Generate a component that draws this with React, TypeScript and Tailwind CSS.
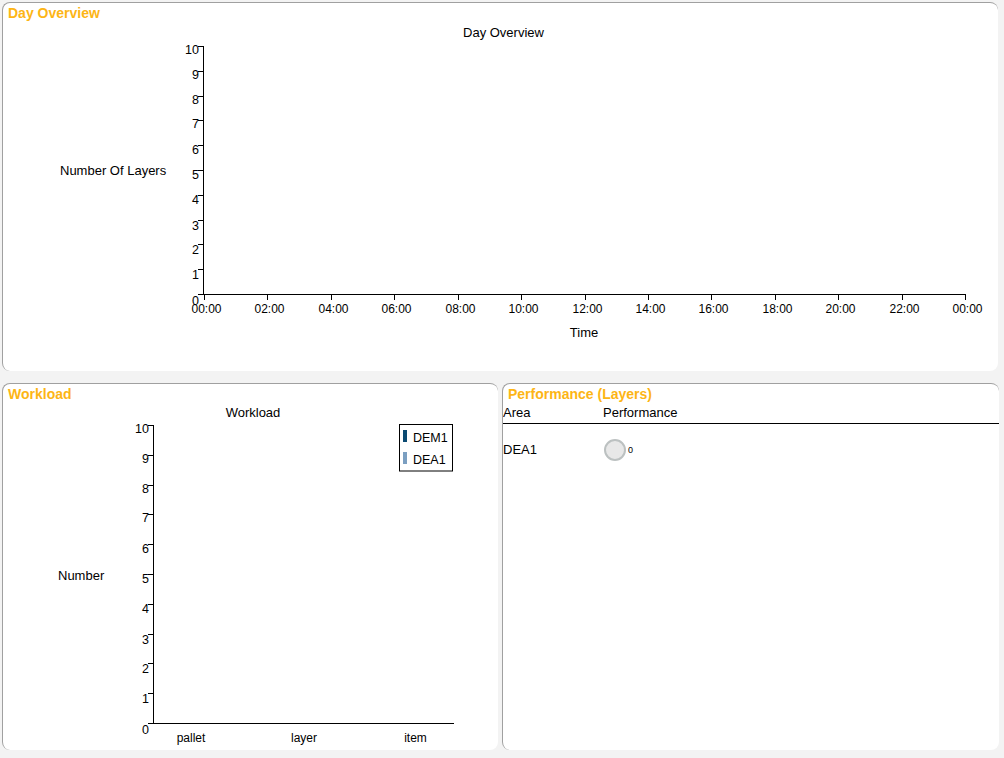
import React, { FC, ReactNode } from "react";

const FONT = '"Liberation Sans", Arial, Helvetica, sans-serif';

interface PanelProps {
  title: string;
  className?: string;
  children?: ReactNode;
}

const Panel: FC<PanelProps> = ({ title, className, children }) => (
  <div
    className={`bg-white border-t border-l border-[#a0a0a0] rounded-[8px] flex flex-col overflow-hidden ${className ?? ""}`}
  >
    <div className="h-[19px] pt-[1px] pl-[5px] text-[14px] leading-[18px] font-bold text-[#fdb515] shrink-0">
      {title}
    </div>
    {children}
  </div>
);

// y axis with ticks on the left, labels 0..10
const YAxis: FC<{ x: number; top: number; bottom: number }> = ({ x, top, bottom }) => {
  const step = (bottom - top) / 10;
  return (
    <g>
      <line x1={x + 0.5} y1={top} x2={x + 0.5} y2={bottom + 1} stroke="#000" strokeWidth={1} />
      {Array.from({ length: 11 }, (_, i) => {
        const y = Math.round(bottom - i * step) + 0.5;
        return (
          <g key={i}>
            <line x1={x - 5} y1={y} x2={x + 1} y2={y} stroke="#000" strokeWidth={1} />
            <text x={x - 4} y={y + 7 + (10 - i) * 0.3} textAnchor="end" fontSize={12.5} fill="#000">
              {i}
            </text>
          </g>
        );
      })}
    </g>
  );
};

const hours = ["00:00", "02:00", "04:00", "06:00", "08:00", "10:00", "12:00", "14:00", "16:00", "18:00", "20:00", "22:00", "00:00"];

const DayOverviewChart: FC = () => {
  const x0 = 204;
  const x1 = 965;
  const step = (x1 - x0) / 12;
  return (
    <svg width={995} height={349} viewBox="3 22 995 349" style={{ fontFamily: FONT }} className="block">
      <text x={503.5} y={36.5} textAnchor="middle" fontSize={13} fill="#000">
        Day Overview
      </text>
      <text x={60} y={175} fontSize={13} fill="#000">
        Number Of Layers
      </text>
      <YAxis x={203} top={46} bottom={294} />
      <line x1={x0} y1={294.5} x2={x1 + 0.5} y2={294.5} stroke="#000" strokeWidth={1} />
      {hours.map((h, j) => {
        const x = Math.round(x0 + j * step) + 0.5;
        return (
          <g key={j}>
            <line x1={x} y1={294} x2={x} y2={300} stroke="#000" strokeWidth={1} />
            <text x={x + 2} y={312.5} textAnchor="middle" fontSize={12} fill="#000">
              {h}
            </text>
          </g>
        );
      })}
      <text x={584} y={337} textAnchor="middle" fontSize={13} fill="#000">
        Time
      </text>
    </svg>
  );
};

const WorkloadChart: FC = () => (
  <svg width={495} height={347} viewBox="3 403 495 347" style={{ fontFamily: FONT }} className="block">
    <text x={253} y={416.5} textAnchor="middle" fontSize={13} fill="#000">
      Workload
    </text>
    <text x={58} y={579.5} fontSize={13} fill="#000">
      Number
    </text>
    <YAxis x={153} top={425} bottom={723} />
    <line x1={153} y1={723.5} x2={454} y2={723.5} stroke="#000" strokeWidth={1} />
    {[
      ["pallet", 191],
      ["layer", 304],
      ["item", 415.5],
    ].map(([t, x]) => (
      <text key={t as string} x={x as number} y={742} textAnchor="middle" fontSize={12} fill="#000">
        {t}
      </text>
    ))}
    <rect x={399.5} y={424.5} width={53} height={46.5} fill="#fff" stroke="#000" strokeWidth={1} />
    <rect x={403} y={430} width={4} height={12} fill="#0b4a72" />
    <text x={413} y={441.5} fontSize={12.5} fill="#000">
      DEM1
    </text>
    <rect x={403} y={452} width={4} height={12} fill="#7b9fc1" />
    <text x={413} y={463.5} fontSize={12.5} fill="#000">
      DEA1
    </text>
  </svg>
);

const rows = [{ area: "DEA1", value: 0 }];

export default function App() {
  return (
    <div
      className="w-[1004px] h-[758px] bg-[#f3f3f3] pt-[2px] pl-[2px] flex flex-col text-black"
      style={{ fontFamily: FONT }}
    >
      <Panel title="Day Overview" className="w-[996px] h-[369px]">
        <DayOverviewChart />
      </Panel>
      <div className="flex gap-[4px] mt-[12px]">
        <Panel title="Workload" className="w-[496px] h-[367px]">
          <WorkloadChart />
        </Panel>
        <Panel title="Performance (Layers)" className="w-[497px] h-[367px]">
          <div className="flex h-[21px] border-b border-black text-[13px] leading-[20px]">
            <div className="w-[100px]">Area</div>
            <div>Performance</div>
          </div>
          {rows.map((r) => (
            <div key={r.area} className="flex items-center h-[51px] text-[13px]">
              <div className="w-[100px]">{r.area}</div>
              <div className="flex items-center ml-[1px]">
                <div className="w-[22px] h-[22px] rounded-full bg-[#e8e8e8] border-2 border-[#bcc1c1]" />
                <span className="ml-[2px] text-[9px] leading-[10px]">{r.value}</span>
              </div>
            </div>
          ))}
        </Panel>
      </div>
    </div>
  );
}
